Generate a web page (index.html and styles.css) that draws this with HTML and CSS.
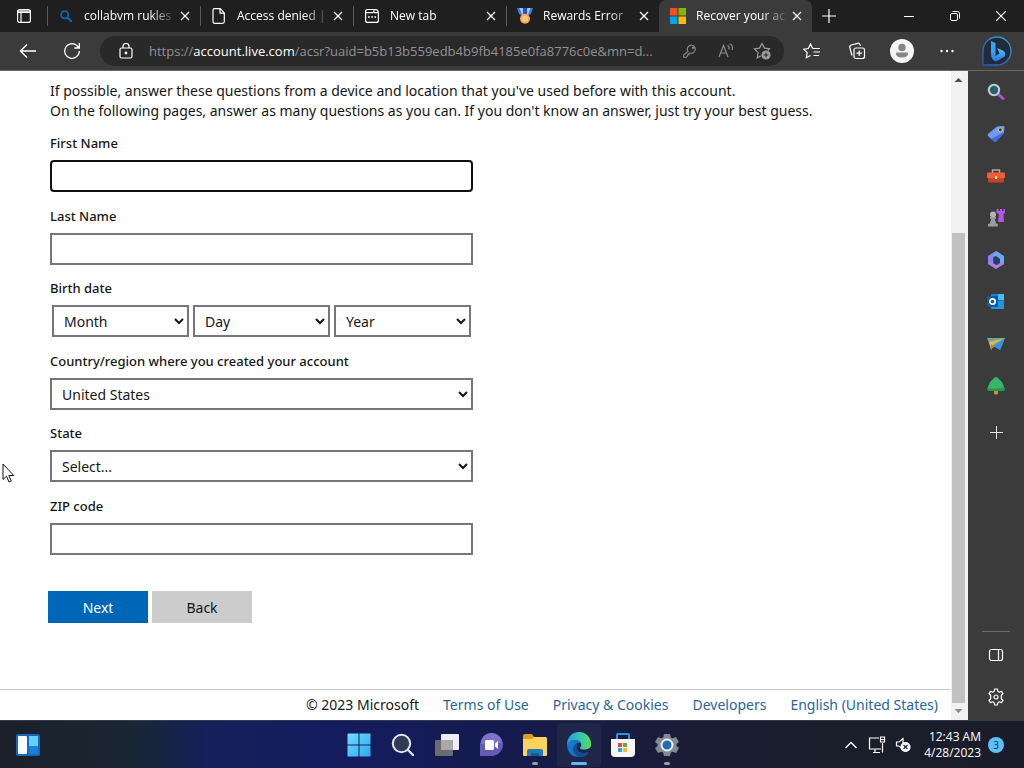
FILE: index.html
```html
<!DOCTYPE html>
<html lang="en">
<head>
<meta charset="utf-8">
<title>Recover your account</title>
<link rel="stylesheet" href="styles.css">
</head>
<body>
<div class="desktop">
  <header class="titlebar">
    <button class="tab-menu" aria-label="Tab actions menu">
      <svg width="16" height="16" viewBox="0 0 16 16" fill="none" stroke="#fff" stroke-width="1.2"><rect x="1.6" y="1.6" width="12.8" height="12.8" rx="2"/><path d="M5 5v9M2 3h12M2 4.4h12" /></svg>
    </button>
    <div class="tabs">
      <div class="tab">
        <svg width="16" height="16" viewBox="0 0 16 16" fill="none" stroke="#1464b4"><circle cx="6.7" cy="6.7" r="3.6" stroke-width="1.8"/><path d="M9.5 9.5l3.6 3.6" stroke-width="2.2" stroke-linecap="round"/></svg>
        <span class="tab-title">collabvm rukles</span>
        <button class="tab-close" aria-label="Close tab"><svg width="10" height="10" viewBox="0 0 10 10" stroke="#fff" stroke-width="1.3"><path d="M1 1l8 8M9 1L1 9"/></svg></button>
      </div>
      <div class="tab">
        <svg width="16" height="16" viewBox="0 0 16 16" fill="none" stroke="#fff" stroke-width="1.2"><path d="M3.5 .7h5.7l4.1 4.2v8.6q0 1.8-1.8 1.8H3.8Q2 15.300 2 13.500V2.300Q2 .7 3.500.7zM9 .9v4.200h4.200"/></svg>
        <span class="tab-title">Access denied |</span>
        <button class="tab-close" aria-label="Close tab"><svg width="10" height="10" viewBox="0 0 10 10" stroke="#fff" stroke-width="1.3"><path d="M1 1l8 8M9 1L1 9"/></svg></button>
      </div>
      <div class="tab">
        <svg width="16" height="16" viewBox="0 0 16 16" fill="none" stroke="#fff" stroke-width="1.2"><path d="M10 1.500H3.600q-2 0-2 2v8.900q0 2 2 2h8.800q2 0 2-2V4.600q0-3-3-3H10M1.600 4.600h7q1.400 0 1.400-1.500V1.500M10 4.600h4"/><path d="M4 9h1.700M7.200 9h1.700M10.400 9h1.700" stroke-width="1.700"/></svg>
        <span class="tab-title">New tab</span>
        <button class="tab-close" aria-label="Close tab"><svg width="10" height="10" viewBox="0 0 10 10" stroke="#fff" stroke-width="1.3"><path d="M1 1l8 8M9 1L1 9"/></svg></button>
      </div>
      <div class="tab">
        <svg width="16" height="16" viewBox="0 0 16 16"><path d="M0 0h16l-2 6-4 2H6L2 6z" fill="#3d78dc"/><path d="M2.500 0h3l1.500 6-2 1zM10.500 0h3L11 7 9 6z" fill="#a9c8f7"/><path d="M6 0h4v6H6z" fill="#2154c4"/><circle cx="8" cy="10.800" r="5" fill="#f3a64a"/><circle cx="8" cy="10.800" r="3.300" fill="#ffc575"/></svg>
        <span class="tab-title">Rewards Error</span>
        <button class="tab-close" aria-label="Close tab"><svg width="10" height="10" viewBox="0 0 10 10" stroke="#fff" stroke-width="1.3"><path d="M1 1l8 8M9 1L1 9"/></svg></button>
      </div>
      <div class="tab tab-active">
        <svg width="16" height="16" viewBox="0 0 16 16"><path fill="#f25022" d="M0 0h7.500v7.500H0z"/><path fill="#7fba00" d="M8.500 0H16v7.500H8.500z"/><path fill="#00a4ef" d="M0 8.500h7.500V16H0z"/><path fill="#ffb900" d="M8.500 8.500H16V16H8.500z"/></svg>
        <span class="tab-title">Recover your ac</span>
        <button class="tab-close" aria-label="Close tab"><svg width="10" height="10" viewBox="0 0 10 10" stroke="#fff" stroke-width="1.3"><path d="M1 1l8 8M9 1L1 9"/></svg></button>
      </div>
    </div>
    <button class="new-tab" aria-label="New tab"><svg width="14" height="14" viewBox="0 0 14 14" stroke="#fff" stroke-width="1.2"><path d="M7 0v14M0 7h14"/></svg></button>
    <div class="window-controls">
      <button aria-label="Minimize"><svg width="10" height="10" viewBox="0 0 10 10" stroke="#fff"><path d="M0 5.500h10"/></svg></button>
      <button aria-label="Restore"><svg width="10" height="10" viewBox="0 0 10 10" fill="none" stroke="#fff"><rect x=".5" y="2.500" width="7" height="7" rx="1.500"/><path d="M2.500.5h5q2 0 2 2v5"/></svg></button>
      <button aria-label="Close"><svg width="10" height="10" viewBox="0 0 10 10" stroke="#fff" stroke-width="1.100"><path d="M0 0l10 10M10 0L0 10"/></svg></button>
    </div>
  </header>

  <nav class="toolbar" aria-label="Browser">
    <button class="nav-button" aria-label="Back"><svg width="18" height="16" viewBox="0 0 18 16" fill="none" stroke="#fff" stroke-width="1.300"><path d="M17 8H1.500M8 1.500L1.500 8 8 14.500"/></svg></button>
    <button class="nav-button" aria-label="Refresh"><svg width="18" height="18" viewBox="0 0 18 18" fill="none" stroke="#fff" stroke-width="1.300"><path d="M16.300 9A7.300 7.300 0 1 1 14 3.700l2 2M16.300 1v5h-5"/></svg></button>
    <div class="address">
      <button class="lock" aria-label="Site information"><svg width="14" height="16" viewBox="0 0 14 16" fill="none" stroke="#fff" stroke-width="1.200"><rect x="1" y="5" width="12" height="10" rx="1.500"/><path d="M4 5V3.500a3 3 0 0 1 6 0V5"/><circle cx="7" cy="10" r=".8" fill="#fff"/></svg></button>
      <span class="url">https://<b>account.live.com</b>/acsr?uaid=b5b13b559edb4b9fb4185e0fa8776c0e&amp;mn=d...</span>
      <button class="address-action" aria-label="Password"><svg width="14" height="14" viewBox="0 0 14 14" fill="none" stroke="#8c8c8c" stroke-width="1.100"><path d="M5 7.500A4 4 0 1 1 7 9l-1 .3v1.500H4.500v1.300L3.500 13.300H.7v-2.500z"/><circle cx="10" cy="4" r=".6"/></svg></button>
      <button class="address-action" aria-label="Read aloud"><svg width="16" height="16" viewBox="0 0 16 16" fill="none" stroke="#8c8c8c" stroke-width="1.200"><path d="M1 14L5.500 2.500 10 14M2.700 10h5.700M9.500 2.500q2 1 1.500 4M11.500.700q3.800 1.500 2.800 6.300"/></svg></button>
      <button class="address-action" aria-label="Add to favorites"><svg width="18" height="18" viewBox="0 0 18 18" fill="none" stroke="#9b9b9b" stroke-width="1.200"><path d="M15 8.500l1.500-1.700-5-.700L9 1.500 6.500 6.100l-5.200.8 3.900 3.700-1 5.300 4-2.100"/><circle cx="13" cy="13" r="4" fill="#a0a0a0"/><path d="M13 10.800v4.400M10.800 13h4.400" stroke="#292929"/></svg></button>
    </div>
    <div class="tools">
      <button aria-label="Favorites"><svg width="18" height="16" viewBox="0 0 18 16" fill="none" stroke="#fff" stroke-width="1.200"><path d="M9.500 5.300L7.500 1 5.300 5.500.7 6.200l3.500 3.500-.9 5 4.200-2.200M9.500 5.500H17M10.500 9H17M10.500 12.500H16"/></svg></button>
      <button aria-label="Collections"><svg width="18" height="18" viewBox="0 0 18 18" fill="none" stroke="#fff" stroke-width="1.200"><rect x="6" y="6" width="10.500" height="10.500" rx="2"/><path d="M11.200 8.500v5.500M8.500 11.200H14M4 13.500L1.800 5.500Q1.400 3.500 3.300 3l6.500-1.700q1.700-.4 2.300 1.500l.3 1"/></svg></button>
      <button aria-label="Profile"><svg width="24" height="24" viewBox="0 0 24 24"><circle cx="12" cy="12" r="12" fill="#f5f5f5"/><circle cx="12" cy="8.500" r="3.700" fill="#858585"/><path d="M6 13.500h12q.5 5-6 5t-6-5z" fill="#858585"/></svg></button>
      <button aria-label="Settings and more"><svg width="16" height="4" viewBox="0 0 16 4" fill="#fff"><circle cx="2.500" cy="2" r="1.200"/><circle cx="8" cy="2" r="1.200"/><circle cx="13.500" cy="2" r="1.200"/></svg></button>
    </div>
    <button class="bing" aria-label="Bing chat"><svg width="32" height="32" viewBox="0 0 32 32"><defs><linearGradient id="ring" x1="0" y1="1" x2="1" y2="0"><stop stop-color="#2856b8"/><stop offset="1" stop-color="#3a9fd0"/></linearGradient><linearGradient id="bing" x1="0" y1="0" x2="0" y2="1"><stop stop-color="#52c4f7"/><stop offset="1" stop-color="#2477e5"/></linearGradient></defs><path d="M2 30V16A14 14 0 1 1 16 30z" fill="#202c3b" stroke="url(#ring)" stroke-width="1.300"/><path d="M10 6l4.500 2v13l-4.500-3z" fill="#35a4f4"/><path d="M10 18l4.500 3 4-2.500-2.300-5.500 6 2.800q3.500 2.200 1.300 5.700l-7 4.300q-2 1-4-.5-2.500-2-2.500-7.300z" fill="url(#bing)"/></svg></button>
  </nav>

  <div class="workspace">
    <div class="viewport">
      <main class="content">
        <p class="intro">If possible, answer these questions from a device and location that you've used before with this account.<br>On the following pages, answer as many questions as you can. If you don't know an answer, just try your best guess.</p>
        <form class="form">
          <div class="field"><label for="first">First Name</label><input class="focused" id="first" type="text"></div>
          <div class="field"><label for="last">Last Name</label><input id="last" type="text"></div>
          <div class="field"><label for="month">Birth date</label>
            <div class="dates">
              <select id="month"><option>Month</option></select>
              <select aria-label="Day"><option>Day</option></select>
              <select aria-label="Year"><option>Year</option></select>
            </div>
          </div>
          <div class="field"><label for="country">Country/region where you created your account</label><select id="country"><option>United States</option></select></div>
          <div class="field"><label for="state">State</label><select id="state"><option>Select...</option></select></div>
          <div class="field"><label for="zip">ZIP code</label><input id="zip" type="text"></div>
          <div class="actions"><button type="button" class="primary">Next</button><button type="button" class="secondary">Back</button></div>
        </form>
      </main>
      <footer class="footer">
        <span>© 2023 Microsoft</span><a href="#">Terms of Use</a><a href="#">Privacy &amp; Cookies</a><a href="#">Developers</a><a href="#">English (United States)</a>
      </footer>
    </div>
    <div class="scrollbar" aria-hidden="true">
      <svg width="13" height="17" viewBox="0 0 13 17"><path d="M2.500 11h8l-4-4z" fill="#505050"/></svg>
      <div class="track"></div><div class="thumb"></div>
      <svg width="13" height="17" viewBox="0 0 13 17"><path d="M2.500 6h8l-4 4z" fill="#8a8a8a"/></svg>
    </div>
    <aside class="sidebar">
      <button aria-label="Search"><svg width="18" height="18" viewBox="0 0 18 18"><path d="M11 11l5 4.500" stroke="#b04fd0" stroke-width="3" stroke-linecap="round"/><circle cx="7" cy="7" r="5.200" fill="#2e5e6a" stroke="#b9d2d8" stroke-width="2"/></svg></button>
      <button aria-label="Shopping"><svg width="18" height="18" viewBox="0 0 18 18"><path d="M10 1.500L16.500 1q1 0 1 1L17 8l-8 8.500q-1 .7-2 0L1 11q-.8-1 0-2z" fill="#6b9bf5"/><path d="M4 14l13-7v1l-8 8.500q-1 .7-2 0z" fill="#4968d8"/><circle cx="13.300" cy="4.800" r="2" fill="#3b3b3b" stroke="#e7c4a0"/></svg></button>
      <button aria-label="Tools"><svg width="18" height="16" viewBox="0 0 18 16"><path d="M5.500 5V2h7v3" fill="none" stroke="#b8aaa4" stroke-width="1.500"/><rect y="4.500" width="18" height="5.500" rx="1" fill="#eb6036"/><path d="M1 10h16v3q0 1.500-1.500 1.500h-13Q1 14.500 1 13z" fill="#c8431f"/><rect x="8" y="8" width="2" height="3" fill="#f5dfc9"/></svg></button>
      <button aria-label="Games"><svg width="18" height="18" viewBox="0 0 18 18"><path d="M9.500 0h2v2H13V0h2v2h1.500V0H18v4l-1.500 1 .5 8h-6l1-8-2.500-1z" fill="#b056e8"/><circle cx="6" cy="5.500" r="3" fill="#b5b5b5"/><path d="M3 8h6v1.700H7.700l1.500 4.800 1.600.5v2.500H1V15l1.800-.5L4.300 9.700H3z" fill="#9c9c9c"/></svg></button>
      <button aria-label="Microsoft 365"><svg width="18" height="18" viewBox="0 0 18 18"><path d="M9 0l5 3-4 3.500L6.500 7v6L1 13V5z" fill="#8b83ea"/><path d="M9 0l8 5v8l-4 2V8.500L9 6 6 4z" fill="#68a9ee"/><path d="M1 12l5 .5L10 14l4-3 3 2-8 5-8-5z" fill="#a980e5"/><path d="M6.500 6L9 5l4 3v3.500L9 13l-2.500-2z" fill="#293c66"/></svg></button>
      <button aria-label="Outlook"><svg width="18" height="18" viewBox="0 0 18 18"><path d="M4 1h13v15H4z" fill="#1766b5"/><path d="M4 1h7v5H4z" fill="#1685d3"/><path d="M11 1h6v6h-6z" fill="#43bdf2"/><path d="M5 11l6-3 6-1v9H4z" fill="#2395df"/><rect y="3" width="11" height="11" rx="1" fill="#075aaa"/><circle cx="5.500" cy="8.500" r="2.700" fill="none" stroke="#fff" stroke-width="1.700"/></svg></button>
      <button aria-label="Drop"><svg width="18" height="16" viewBox="0 0 18 16"><path d="M0 2h18l-5 12-5-3-4 1z" fill="#41a9e0"/><path d="M0 2h18L4 8z" fill="#68a98f"/><path d="M2 6l16-4-11 6-3 6z" fill="#eab543"/><path d="M4 8l3 2-3 4z" fill="#d27435"/><path d="M7 10l11-8-5 12z" fill="#3b91d4"/></svg></button>
      <button aria-label="Tree"><svg width="18" height="18" viewBox="0 0 18 18"><path d="M7 12h4v5q-2 1-4 0z" fill="#c79522"/><path d="M9 0q1.500 0 2.500 1.500L15 5l2.500 6q.5 3-1.500 3H2q-2 0-1.500-3L3 5l3.500-3.500Q7.500 0 9 0z" fill="#38b568"/><path d="M1 11q8 2 16-1l.5 2q0 2-1.500 2H2q-1.500 0-1.500-2z" fill="#24975b"/></svg></button>
      <button class="sidebar-add" aria-label="Add app"><svg width="13" height="13" viewBox="0 0 13 13" stroke="#e6e6e6"><path d="M6.500 0v13M0 6.500h13"/></svg></button>
      <div class="sidebar-bottom">
        <button aria-label="Hide sidebar"><svg width="16" height="16" viewBox="0 0 16 16" fill="none" stroke="#fff" stroke-width="1.200"><rect x="1.500" y="2.500" width="13" height="11" rx="2"/><path d="M10.500 2.500v11"/></svg></button>
        <button aria-label="Sidebar settings"><svg width="18" height="18" viewBox="0 0 18 18" fill="none" stroke="#fff" stroke-width="1.200" stroke-linejoin="round"><path d="M7.200 3.200L7.700 1h2.600l.5 2.200 1.600 1 2.200-.8 1.400 2.300-1.700 1.600v3.400l1.700 1.600-1.400 2.300-2.200-.8-1.600 1-.5 2.200H7.700l-.5-2.200-1.600-1-2.200.8L2 12.300l1.700-1.600V7.300L2 5.700l1.400-2.300 2.200.8z"/><circle cx="9" cy="9" r="2"/></svg></button>
      </div>
    </aside>
  </div>

  <nav class="taskbar" aria-label="Taskbar">
    <button class="widgets" aria-label="Widgets"><svg width="24" height="22" viewBox="0 0 24 22"><rect width="24" height="22" rx="2" fill="#1769b5"/><rect x="2" y="2" width="9" height="18" rx="1" fill="#f8fcff"/><path d="M13 2h9v10h-9z" fill="#64d1fb"/><path d="M13 12h9v8h-9z" fill="#1683d8"/></svg></button>
    <div class="apps">
      <button aria-label="Start"><svg width="24" height="24" viewBox="0 0 24 24"><defs><linearGradient id="win" x1="0" y1="0" x2="1" y2="1"><stop stop-color="#73dcfb"/><stop offset="1" stop-color="#28a9ed"/></linearGradient></defs><path d="M1 .5h10.500v11H.5V1zM12.500.5h11v11h-11zM.5 12.500h11v11H.5zM12.500 12.500h11v11h-11z" fill="url(#win)"/></svg></button>
      <button aria-label="Search"><svg width="24" height="24" viewBox="0 0 24 24"><path d="M16 16l6 6" stroke="#d5e0f5" stroke-width="2.400" stroke-linecap="round"/><circle cx="10.500" cy="10.500" r="8.700" fill="#303b55" stroke="#e0e6ef" stroke-width="2"/></svg></button>
      <button aria-label="Task view"><svg width="24" height="24" viewBox="0 0 24 24"><rect x="6" y="1" width="18" height="16" rx="1" fill="#eeedf5"/><rect y="7" width="18" height="16" rx="1" fill="#686b70"/><path d="M6 7h12v10H6z" fill="#a8a9a8"/></svg></button>
      <button aria-label="Chat"><svg width="24" height="24" viewBox="0 0 24 24"><path d="M1 23V12A11.500 11.500 0 1 1 12.500 23z" fill="#655bb6"/><path d="M2 11A10.500 10.500 0 0 1 23 10z" fill="#7d72c8"/><rect x="6" y="7" width="9" height="10" rx="1.500" fill="#fff"/><path d="M16 10.500L19 8v8l-3-2.500z" fill="#fff"/></svg></button>
      <button class="running" aria-label="File Explorer"><svg width="26" height="24" viewBox="0 0 26 24"><path d="M1 3q0-2 2-2h7l2 3h11q2 0 2 2v16H1z" fill="#de9b20"/><path d="M1 6h9l2-2h11q2 0 2 2v16q0 1-1 1H2q-1 0-1-1z" fill="#fbd25c"/><path d="M5 23v-5q0-2 2-2h12q2 0 2 2v5z" fill="#1d7bbd"/><path d="M9 20h8v3H9z" fill="#125d96"/></svg></button>
      <button class="running current" aria-label="Microsoft Edge"><svg width="26" height="26" viewBox="0 0 26 26"><defs><linearGradient id="edge"><stop stop-color="#239fdf"/><stop offset=".6" stop-color="#35c9ac"/><stop offset="1" stop-color="#64d955"/></linearGradient></defs><path d="M1 13A12 12 0 0 1 25 11q1 6-6 6.500-5 .5-5-2 2-1 1-4-2-4-7-3-5 1-7 4.500z" fill="url(#edge)"/><path d="M1 13q2-5 7-5 5-.5 7 3-6-1-6 5 1 8 10 7 2-1 4-3-3 5-10 5Q2 25 1 13z" fill="#1777c7"/><path d="M10 12q-5 4-2 9 2 3 6 4 6 0 9-5-9 3-12-3-1-2 1-5z" fill="#164d91"/></svg></button>
      <button aria-label="Microsoft Store"><svg width="26" height="24" viewBox="0 0 26 24"><path d="M7 6V2q0-1 1-1h10q1 0 1 1v4" fill="none" stroke="#2997dc" stroke-width="2"/><path d="M1 6h24v14q0 4-4 4H5q-4 0-4-4z" fill="#f5f7f9"/><path d="M8 10h4v4H8z" fill="#de4c37"/><path d="M13 10h4v4h-4z" fill="#74a545"/><path d="M8 15h4v4H8z" fill="#389ee0"/><path d="M13 15h4v4h-4z" fill="#f3b934"/></svg></button>
      <button class="running" aria-label="Settings"><svg width="24" height="24" viewBox="0 0 24 24"><path d="M9 1h6l.7 3.300 1.800 1L21 4l3 5-2.500 2v2l2.500 2-3 5-3.500-1.300-1.800 1L15 23H9l-.7-3.300-1.800-1L3 20l-3-5 2.500-2v-2L0 9l3-5 3.500 1.300 1.800-1z" fill="#85888f"/><circle cx="12" cy="12" r="5.500" fill="#256bb1" stroke="#e3f2fc" stroke-width="2"/></svg></button>
    </div>
    <div class="tray">
      <button aria-label="Show hidden icons"><svg width="12" height="8" viewBox="0 0 12 8" fill="none" stroke="#fff" stroke-width="1.300"><path d="M.5 7L6 1.500 11.500 7"/></svg></button>
      <button aria-label="Network"><svg width="18" height="18" viewBox="0 0 18 18" fill="none" stroke="#fff" stroke-width="1.200"><path d="M11 2H1.500v11H13M5 16.500h7M7 13v3.500M14.500 7v9.500M12.500 1h4v5h-4zM12.500 3.500h4"/></svg></button>
      <button aria-label="Volume"><svg width="16" height="16" viewBox="0 0 16 16" fill="none" stroke="#fff" stroke-width="1.200"><path d="M7 11.500L4 9H1.500V5H4l4-3.500V6"/><circle cx="10.500" cy="10" r="4.500" fill="#fff"/><path d="M8.500 8l4 4M12.500 8l-4 4" stroke="#1b2030"/></svg></button>
      <button class="clock">12:43 AM<br>4/28/2023</button>
      <button class="badge" aria-label="3 notifications">3</button>
    </div>
  </nav>
  <svg class="pointer" width="14" height="21" viewBox="0 0 14 21"><path d="M1 1v15.500l3.500-3.300L7 19l2.300-1-2.500-5.500h5z" fill="#fff" stroke="#111"/></svg>
</div>
</body>
</html>
```
FILE: styles.css
```css
* { box-sizing: border-box; }
body { margin: 0; font-family: "Open Sans", "Noto Sans", sans-serif; color: #161616; }
button { display: flex; align-items: center; justify-content: center; padding: 0; border: 0; background: none; color: inherit; font: inherit; }
svg { display: block; flex: none; }

.desktop { position: relative; display: flex; flex-direction: column; height: 100vh; overflow: hidden; background: #fff; }

.titlebar { display: flex; flex: none; height: 32px; background: #1f1f1f; color: #fff; font-size: 12px; }
.tab-menu { width: 47px; flex: none; }
.tabs { display: flex; flex: 0 1 765px; min-width: 0; }
.tab { display: flex; flex: 1; align-items: center; gap: 10px; min-width: 0; padding: 0 10px 0 11px; position: relative; }
.tab::before { content: ""; position: absolute; left: 0; top: 6px; height: 20px; border-left: 1px solid #5c5c5c; }
.tab-active { background: #3b3b3b; border-radius: 7px 7px 0 0; }
.tab-active::before { display: none; }
.tab-title { flex: 1; margin-right: -8px; white-space: nowrap; line-height: 18px; mask-image: linear-gradient(90deg, #000 70%, transparent); }
.tab-close { width: 10px; height: 16px; }
.new-tab { width: 34px; flex: none; }
.window-controls { display: flex; margin-left: auto; }
.window-controls button { width: 46px; }

.toolbar { display: flex; flex: none; align-items: center; height: 39px; padding-left: 6px; background: #3b3b3b; border-bottom: 1px solid #686868; }
.nav-button { width: 44px; height: 32px; }
.address { display: flex; flex: 1; align-items: center; min-width: 0; height: 30px; margin-left: 6px; padding: 0 4px 0 12px; border-radius: 15px; background: #292929; }
.lock { width: 28px; }
.url { flex: 1; min-width: 0; margin: 0 2px 0 9px; overflow: hidden; white-space: nowrap; text-overflow: ellipsis; color: #929292; font-size: 13px; line-height: 20px; }
.url b { color: #fff; font-weight: 400; }
.address-action { width: 36px; }
.tools { display: flex; padding-left: 5px; }
.tools button { width: 45px; height: 32px; }
.bing { width: 55px; }

.workspace { display: flex; flex: 1; min-height: 0; }
.viewport { display: flex; flex: 1; flex-direction: column; min-width: 0; font-family: "Noto Sans", "Open Sans", sans-serif; }
.content { flex: 1; padding: 10px 48px 0 50px; }
.intro { margin: 0 0 12px; font-size: 14px; line-height: 20px; }
.form { max-width: 423px; }
.field { margin-bottom: 14px; }
.field:nth-child(even) { margin-bottom: 13px; }
.field label { display: block; margin-bottom: 7px; font-size: 13px; font-weight: 500; line-height: 20px; }
.field input, .field select { display: block; width: 100%; height: 32px; padding: 0 6px; border: 2px solid #767676; border-radius: 0; background-color: #fff; color: #161616; font: 14px/20px "Noto Sans", "Open Sans", sans-serif; }
.field .focused { border-color: #101010; border-radius: 4px; }
.dates { display: flex; gap: 4px; padding: 0 2px; }
.dates select { flex: 1; min-width: 0; }
.actions { display: flex; gap: 4px; margin: 36px 0 0 -2px; }
.actions button { width: 100px; height: 32px; font-size: 14px; }
.actions .primary { background: #0067b8; color: #fff; }
.actions .secondary { background: #ccc; }
.footer { display: flex; align-items: center; justify-content: flex-end; gap: 24px; height: 31px; padding-right: 13px; border-top: 1px solid #c8c8c8; font-size: 14px; line-height: 20px; white-space: nowrap; }
.footer a { color: #2a659a; text-decoration: none; }

.scrollbar { display: flex; flex-direction: column; width: 17px; padding: 0 3px 0 1px; background: #f1f1f1; }
.track { flex: 145; }
.thumb { flex: 470; background: #c1c1c1; }

.sidebar { display: flex; flex: none; flex-direction: column; width: 56px; background: #3b3b3b; }
.sidebar button { height: 42px; width: 100%; }
.sidebar .sidebar-add { height: 50px; }
.sidebar-bottom { margin: auto 14px 2px; padding-top: 2px; border-top: 1px solid #696969; }

.taskbar { display: grid; flex: none; grid-template-columns: 1fr auto 1fr; align-items: center; height: 48px; padding-left: 2px; border-top: 1px solid #363b52; background: linear-gradient(90deg, #1b202a 0%, #1a2733 13%, #14215a 20%, #141c60 32%, #151b4c 50%, #191d36 67%, #1a1e2b 80%, #1a1d29 100%); color: #fff; }
.widgets { width: 24px; margin-left: 14px; }
.apps { display: flex; }
.apps button { position: relative; width: 44px; height: 44px; }
.running::after { content: ""; position: absolute; bottom: 2px; width: 6px; height: 3px; border-radius: 2px; background: #9a9dac; }
.apps .current { border-radius: 4px; background: #20254a; }
.current::after { width: 16px; background: #60b8f3; }
.tray { display: flex; align-items: center; justify-content: flex-end; padding-right: 20px; }
.tray button { min-width: 26px; height: 40px; }
.tray .clock { display: block; margin: 0 7px 0 8px; padding-top: 3px; text-align: right; font-size: 11px; line-height: 16px; }
.tray .badge { min-width: 16px; height: 16px; border-radius: 8px; background: #5ac0f5; color: #102a45; font-size: 10px; }
.tray .clock { padding-top: 0; font-size: 12px; }

.pointer { position: absolute; left: 2px; top: 463px; }
```
